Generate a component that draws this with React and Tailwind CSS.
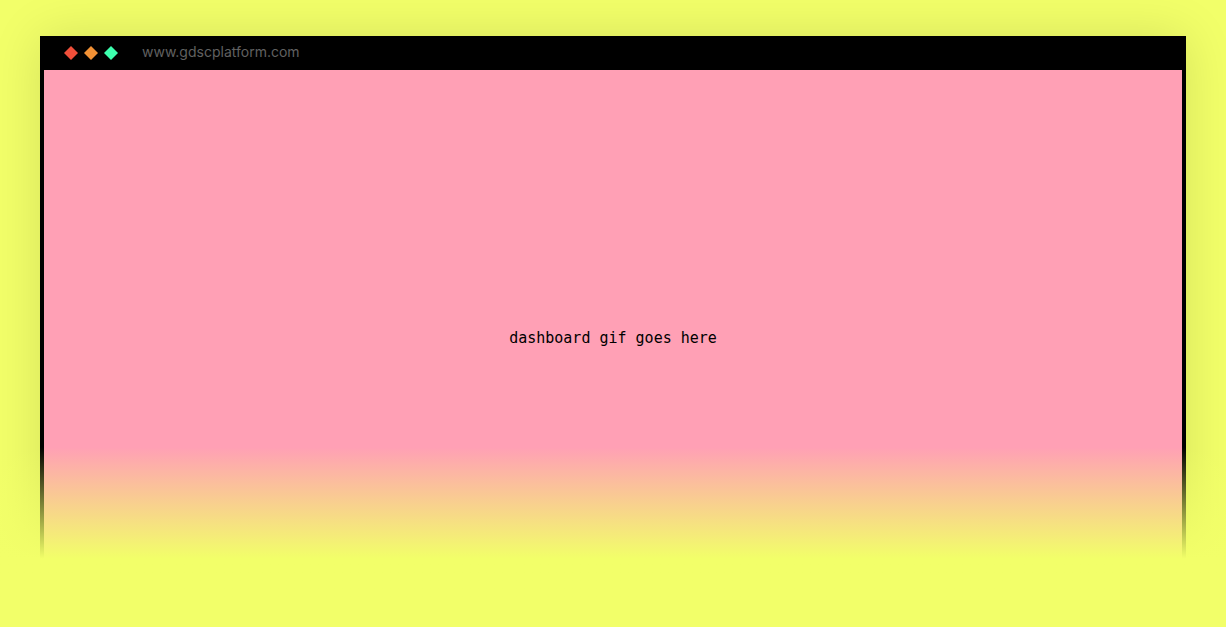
export default function App() {
  return (
    <div className="flex h-screen flex-col overflow-hidden bg-[#f2ff69] px-10 pt-9 pb-4">
      <main className="relative flex flex-1 flex-col bg-black px-1 pb-1 shadow-[0_0_48px_rgba(0,0,0,0.12)]">
        <header className="flex h-[34px] shrink-0 items-center px-5">
          <svg width="54" height="14" viewBox="0 0 54 14" aria-hidden="true">
            <path d="M7 0l7 7-7 7-7-7z" fill="#f04f3a" />
            <path d="M27 0l7 7-7 7-7-7z" fill="#f29135" />
            <path d="M47 0l7 7-7 7-7-7z" fill="#3dffae" />
          </svg>
          <a href="#" className="ml-6 pb-0.5 font-['Inter',sans-serif] text-sm text-[#616161]">www.gdscplatform.com</a>
        </header>
        <section className="flex flex-1 items-center justify-center bg-[#ffa0b5]">
          <p className="font-['DejaVu_Sans_Mono',monospace] text-[15px] text-black">dashboard gif goes here</p>
        </section>
        <div className="absolute -inset-x-10 -bottom-4 h-[180px] bg-linear-to-t from-[#f2ff69] from-38% to-[#f2ff69]/0" />
      </main>
    </div>
  );
}
